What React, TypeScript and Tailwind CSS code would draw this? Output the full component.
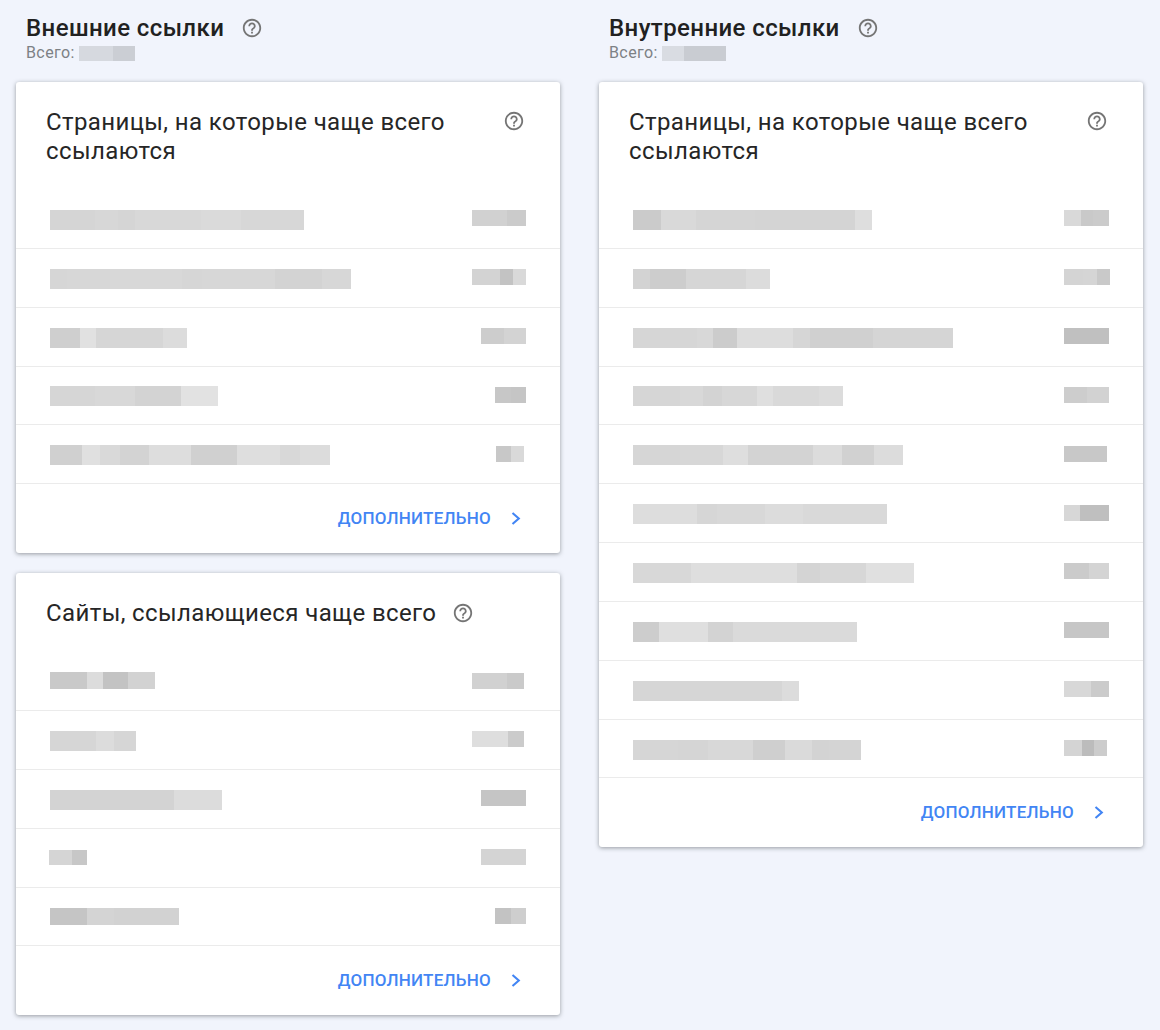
const help = "M11 18h2v-2h-2v2zm1-16C6.48 2 2 6.48 2 12s4.48 10 10 10 10-4.48 10-10S17.52 2 12 2zm0 18c-4.41 0-8-3.59-8-8s3.59-8 8-8 8 3.59 8 8-3.59 8-8 8zm0-14c-2.21 0-4 1.79-4 4h2c0-1.1.9-2 2-2s2 .9 2 2c0 2-3 1.75-3 5h2c0-2.25 3-2.5 3-5 0-2.21-1.79-4-4-4z";

type Seg = [number, string];
type Row = { s: number; l: Seg[]; vs: number; v: Seg[]; h?: number };

function HelpIcon({ className }: { className: string }) {
  return (
    <svg viewBox="0 0 24 24" className={className} fill="#757575">
      <path d={help} />
    </svg>
  );
}

function Blur({ start, segs, className, height }: { start: number; segs: Seg[]; className: string; height?: number }) {
  let prev = start;
  return (
    <div className={`flex shrink-0 ${className}`} style={height ? { height, marginBottom: 3 } : undefined}>
      {segs.map(([end, color], i) => {
        const w = end - prev;
        prev = end;
        return <div key={i} style={{ width: w, backgroundColor: color }} />;
      })}
    </div>
  );
}

function Card({ title, rows, origin, wrapIcon }: { title: string; rows: Row[]; origin: number; wrapIcon?: boolean }) {
  return (
    <section className="bg-white rounded-[3px] shadow-[0_1px_4px_rgba(60,64,67,0.5)]">
      <div className={wrapIcon ? "flex justify-between pl-[30px] pr-[35px] pt-[26px] pb-[24px]" : "flex items-center gap-[16px] pl-[30px] pt-[26px] pb-[24px]"}>
        <h3 className={wrapIcon ? "text-[24px] leading-[29px] tracking-[0.39px] text-[#262626] w-[420px]" : "text-[24px] leading-[29px] tracking-[0.39px] text-[#262626]"}>{title}</h3>
        <HelpIcon className={wrapIcon ? "w-[22px] h-[22px] mt-[2px] shrink-0" : "w-[22px] h-[22px] -mt-[2px] shrink-0"} />
      </div>
      {rows.map((r, i) => {
        const valueEnd = r.v[r.v.length - 1][0];
        return (
          <div key={i} className="h-[58.85px] border-b border-[#ebebeb] flex items-center justify-between pt-[2px]" style={{ paddingLeft: r.s - origin, paddingRight: origin + 544 - valueEnd }}>
            <Blur start={r.s} segs={r.l} className="h-5" height={r.h} />
            <Blur start={r.vs} segs={r.v} className="h-4 mb-[3px]" />
          </div>
        );
      })}
      <div className="h-[69px] flex items-center justify-end pr-[38px]">
        <span className="text-[17px] tracking-[0.25px] font-medium text-[#4285f4] mr-[19px]">ДОПОЛНИТЕЛЬНО</span>
        <svg viewBox="0 0 12 15" className="w-3 h-[15px]" fill="none" stroke="#4285f4" strokeWidth="2.1">
          <polyline points="2.5,2 8.8,7.5 2.5,13" />
        </svg>
      </div>
    </section>
  );
}

function Heading({ title, start, segs }: { title: string; start: number; segs: Seg[] }) {
  return (
    <header className="pl-[10px] h-[82px] pt-[14px]">
      <div className="flex items-center gap-[17px] h-7">
        <h2 className="text-[24px] leading-7 tracking-[0.4px] font-medium text-[#212121]">{title}</h2>
        <HelpIcon className="w-[22px] h-[22px]" />
      </div>
      <div className="flex items-center h-5 mt-[1px]">
        <span className="text-[16px] leading-5 tracking-[0.4px] text-[#7d8185] w-[53px]">Всего:</span>
        <Blur start={start} segs={segs} className="h-[15px]" />
      </div>
    </header>
  );
}

const a: Row[] = [
  { s: 50, l: [[95, "#d5d5d5"], [118, "#d7d7d7"], [135, "#d5d5d5"], [201, "#d8d8d8"], [241, "#dadada"], [304, "#d7d7d7"]], vs: 472, v: [[507, "#d1d1d1"], [526, "#cbcbcb"]] },
  { s: 50, l: [[67, "#d6d6d6"], [110, "#d7d7d7"], [182, "#d8d8d8"], [202, "#d6d6d6"], [275, "#d7d7d7"], [322, "#d3d3d3"], [351, "#d7d7d7"]], vs: 472, v: [[500, "#d3d3d3"], [513, "#c3c3c3"], [526, "#d9d9d9"]] },
  { s: 50, l: [[80, "#cfcfcf"], [96, "#e1e1e1"], [163, "#d6d6d6"], [187, "#dcdcdc"]], vs: 481, v: [[504, "#cdcdcd"], [526, "#d3d3d3"]] },
  { s: 50, l: [[95, "#d6d6d6"], [135, "#d8d8d8"], [181, "#d3d3d3"], [218, "#e2e2e2"]], vs: 495, v: [[511, "#c7c7c7"], [526, "#c5c5c5"]] },
  { s: 50, l: [[82, "#d0d0d0"], [100, "#e0e0e0"], [120, "#d9d9d9"], [149, "#d3d3d3"], [191, "#dddddd"], [237, "#d0d0d0"], [280, "#dedede"], [300, "#d8d8d8"], [330, "#dcdcdc"]], vs: 496, v: [[511, "#c8c8c8"], [524, "#d9d9d9"]] },
];

const b: Row[] = [
  { s: 50, h: 17, l: [[87, "#c9c9c9"], [103, "#dcdcdc"], [128, "#c3c3c3"], [155, "#d2d2d2"]], vs: 472, v: [[507, "#d1d1d1"], [524, "#cacaca"]] },
  { s: 50, l: [[96, "#d6d6d6"], [114, "#dcdcdc"], [136, "#d6d6d6"]], vs: 472, v: [[508, "#dedede"], [524, "#cbcbcb"]] },
  { s: 50, l: [[120, "#d3d3d3"], [174, "#d3d3d3"], [222, "#dcdcdc"]], vs: 481, v: [[526, "#c5c5c5"]] },
  { s: 49, h: 15, l: [[72, "#d5d5d5"], [87, "#c7c7c7"]], vs: 481, v: [[526, "#d4d4d4"]] },
  { s: 50, h: 17, l: [[87, "#c5c5c5"], [114, "#d4d4d4"], [179, "#d2d2d2"]], vs: 495, v: [[511, "#c3c3c3"], [526, "#cecece"]] },
];

const c: Row[] = [
  { s: 633, l: [[661, "#cbcbcb"], [696, "#d9d9d9"], [755, "#d5d5d5"], [855, "#d4d4d4"], [872, "#dedede"]], vs: 1064, v: [[1081, "#d9d9d9"], [1093, "#c9c9c9"], [1109, "#cbcbcb"]] },
  { s: 633, l: [[650, "#d3d3d3"], [686, "#cdcdcd"], [746, "#d6d6d6"], [770, "#dcdcdc"]], vs: 1064, v: [[1083, "#d4d4d4"], [1097, "#d5d5d5"], [1110, "#c9c9c9"]] },
  { s: 633, l: [[697, "#d6d6d6"], [713, "#d8d8d8"], [737, "#cccccc"], [793, "#dddddd"], [810, "#d6d6d6"], [873, "#d0d0d0"], [953, "#d5d5d5"]], vs: 1064, v: [[1109, "#c0c0c0"]] },
  { s: 633, l: [[680, "#d6d6d6"], [703, "#d8d8d8"], [722, "#d3d3d3"], [757, "#d7d7d7"], [773, "#dfdfdf"], [819, "#d9d9d9"], [843, "#dcdcdc"]], vs: 1064, v: [[1087, "#cdcdcd"], [1109, "#d2d2d2"]] },
  { s: 633, l: [[680, "#d6d6d6"], [723, "#d7d7d7"], [748, "#dedede"], [813, "#d3d3d3"], [842, "#dcdcdc"], [874, "#d1d1d1"], [903, "#dcdcdc"]], vs: 1064, v: [[1107, "#c8c8c8"]] },
  { s: 633, l: [[697, "#dddddd"], [717, "#d6d6d6"], [765, "#d8d8d8"], [803, "#dcdcdc"], [887, "#d9d9d9"]], vs: 1064, v: [[1080, "#d7d7d7"], [1109, "#bfbfbf"]] },
  { s: 633, l: [[691, "#d8d8d8"], [797, "#dedede"], [820, "#d4d4d4"], [866, "#d7d7d7"], [914, "#e0e0e0"]], vs: 1064, v: [[1089, "#cbcbcb"], [1109, "#d4d4d4"]] },
  { s: 633, l: [[659, "#cdcdcd"], [708, "#dfdfdf"], [733, "#d3d3d3"], [857, "#dadada"]], vs: 1064, v: [[1109, "#c6c6c6"]] },
  { s: 633, l: [[782, "#d6d6d6"], [799, "#dcdcdc"]], vs: 1064, v: [[1091, "#d8d8d8"], [1109, "#cbcbcb"]] },
  { s: 633, l: [[678, "#d6d6d6"], [708, "#d5d5d5"], [753, "#d8d8d8"], [785, "#cfcfcf"], [812, "#dadada"], [829, "#d3d3d3"], [861, "#d4d4d4"]], vs: 1064, v: [[1082, "#d4d4d4"], [1094, "#bcbcbc"], [1107, "#cccccc"]] },
];

export default function App() {
  return (
    <div className="w-[1160px] h-[1030px] overflow-hidden bg-[#f1f4fc] flex gap-[39px] pl-4 font-['Roboto',sans-serif]">
      <div className="w-[544px]">
        <Heading title="Внешние ссылки" start={79} segs={[[113, "#d6d9df"], [135, "#cbced4"]]} />
        <div className="flex flex-col gap-5">
          <Card title="Страницы, на которые чаще всего ссылаются" rows={a} origin={16} wrapIcon />
          <Card title="Сайты, ссылающиеся чаще всего" rows={b} origin={16} />
        </div>
      </div>
      <div className="w-[544px]">
        <Heading title="Внутренние ссылки" start={663} segs={[[685, "#d9dce2"], [727, "#c9ccd2"]]} />
        <Card title="Страницы, на которые чаще всего ссылаются" rows={c} origin={599} wrapIcon />
      </div>
    </div>
  );
}
